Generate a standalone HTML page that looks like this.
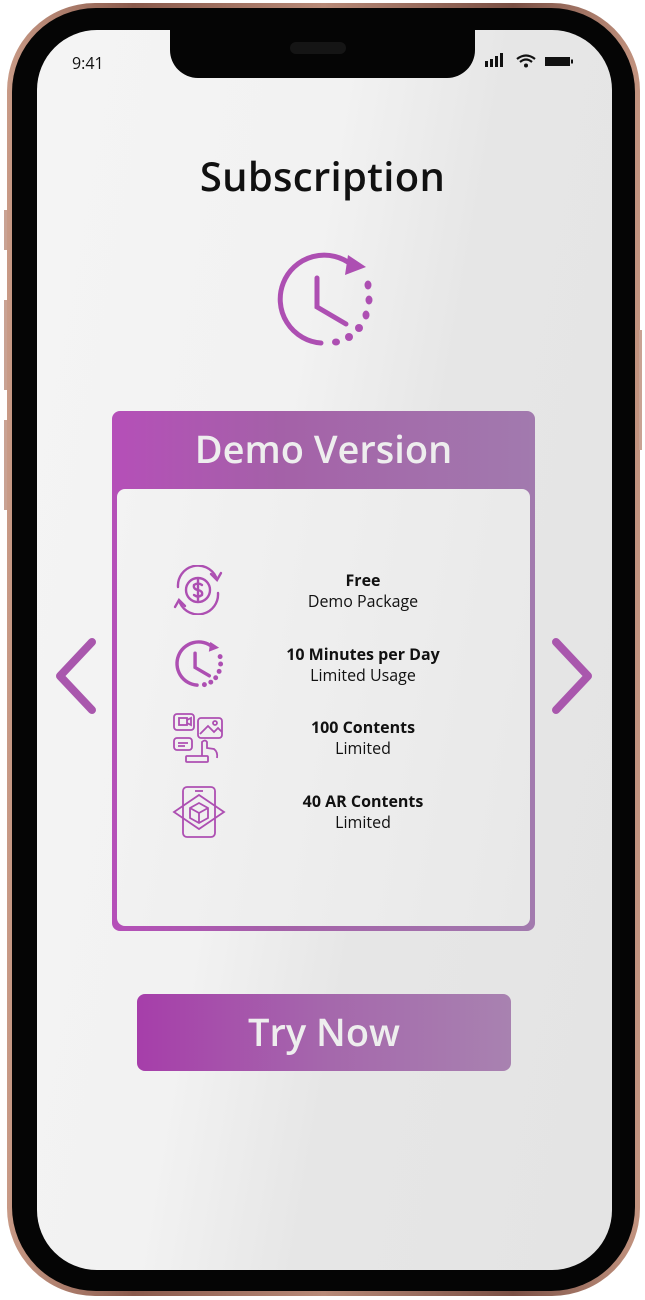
<!DOCTYPE html>
<html><head><meta charset="utf-8"><style>
html,body{margin:0;padding:0;background:#fff;width:645px;height:1300px;overflow:hidden;font-family:"Open Sans","Liberation Sans",sans-serif}
.frame{position:absolute;left:7px;top:3px;width:633px;height:1293px;border-radius:88px;background:linear-gradient(90deg,#c89a86,#8a5a4c 20%,#b88a78 50%,#7a4f44 80%,#c39480);}
.bezel{position:absolute;left:12px;top:8px;width:623px;height:1283px;border-radius:84px;background:#050505}
.screen{position:absolute;left:37px;top:30px;width:575px;height:1240px;border-radius:60px;background:linear-gradient(100deg,#f4f4f4 0%,#f2f2f2 40%,#e6e6e6 60%,#e4e4e4 100%);overflow:hidden}
.notch{position:absolute;left:170px;top:22px;width:305px;height:56px;background:#050505;border-radius:0 0 28px 28px}
.time{position:absolute;left:72px;top:52px;font-size:16px;color:#111}
h1{position:absolute;left:0;width:645px;top:148px;margin:0;text-align:center;font-weight:600;font-size:40px;color:#111;letter-spacing:0.3px}
.card{position:absolute;left:112px;top:411px;width:423px;height:520px;border-radius:8px;background:linear-gradient(90deg,#b54fb8,#a461a8 40%,#a27aae);}
.card .t{position:absolute;left:0;width:423px;top:18px;text-align:center;color:#eee;font-size:38px;line-height:40px;font-weight:600}
.inner{position:absolute;left:5px;top:78px;width:413px;height:437px;border-radius:8px;background:linear-gradient(100deg,#f3f3f3,#e8e8e8)}
.row{position:absolute;left:238px;width:250px;text-align:center;font-size:16px;color:#111;line-height:21px}
.btn{position:absolute;left:137px;top:994px;width:374px;height:77px;border-radius:8px;background:linear-gradient(90deg,#a63eaa,#a567ac 50%,#a882b0);color:#eee;text-align:center;font-size:38px;line-height:77px;font-weight:600}
.side{position:absolute;background:#c9a293;width:3px}
</style></head><body>
<div class="frame"></div>
<div class="bezel"></div>
<div class="side" style="left:4px;top:210px;height:40px"></div>
<div class="side" style="left:4px;top:300px;height:90px"></div>
<div class="side" style="left:4px;top:420px;height:90px"></div>
<div class="side" style="left:639px;top:330px;height:120px"></div>
<div class="screen"></div>
<div class="notch"></div>
<div style="position:absolute;left:290px;top:42px;width:56px;height:12px;border-radius:6px;background:#151515"></div>
<div class="time">9:41</div>
<svg style="position:absolute;left:484px;top:52px" width="95" height="20" viewBox="0 0 95 20">
<rect x="1" y="9" width="3" height="6" fill="#111"/><rect x="6" y="7" width="3" height="8" fill="#111"/><rect x="11" y="4" width="3" height="11" fill="#111"/><rect x="16" y="1" width="3" height="14" fill="#111"/>
<path d="M33 7 Q42 0 51 7" stroke="#111" stroke-width="2.2" fill="none"/><path d="M36 10 Q42 5 48 10" stroke="#111" stroke-width="2.2" fill="none"/><circle cx="42" cy="13.5" r="2" fill="#111"/>
<rect x="61" y="5" width="25" height="9" fill="#111"/><rect x="87" y="7.5" width="2" height="4" fill="#111"/>
</svg>
<h1>Subscription</h1>
<svg style="position:absolute;left:270px;top:245px" width="110" height="110" viewBox="0 0 110 110">
<g stroke="#ad4fb2" stroke-width="5" fill="none" stroke-linecap="round">
<path d="M51 98 A44 44 0 1 1 82 20"/>
<path d="M47 33 V62 L76 79"/>
</g>
<path d="M78 10 L96 22 L75 30 Z" fill="#ad4fb2"/>
<g fill="#ad4fb2"><ellipse cx="98" cy="40" rx="3.5" ry="4.5"/><ellipse cx="99" cy="55" rx="3.5" ry="4.5"/><ellipse cx="96" cy="70" rx="3.5" ry="4.5"/><ellipse cx="89" cy="83" rx="4" ry="4"/><ellipse cx="79" cy="92" rx="4" ry="4"/><ellipse cx="66" cy="97" rx="4" ry="3.5"/></g>
</svg>
<div class="card"><div class="t">Demo Version</div><div class="inner"></div></div>
<svg style="position:absolute;left:170px;top:565px" width="56" height="50" viewBox="0 0 56 50">
<g stroke="#ad4fb2" stroke-width="2.4" fill="none" stroke-linecap="round">
<path d="M8 22 A20 20 0 0 1 46 12"/><path d="M48 28 A20 20 0 0 1 10 38"/>
<path d="M41 9 L47 15 L51 8"/><path d="M15 41 L9 35 L5 42"/>
<circle cx="28" cy="25" r="12"/>
<path d="M32 20 Q28 17 24 20 Q23 24 28 25 Q33 26 32 30 Q28 33 24 30 M28 15 V35"/>
</g></svg>
<svg style="position:absolute;left:172px;top:637px" width="54" height="54" viewBox="0 0 110 110">
<g stroke="#ad4fb2" stroke-width="7" fill="none" stroke-linecap="round">
<path d="M51 98 A44 44 0 1 1 82 20"/><path d="M47 33 V62 L76 79"/></g>
<path d="M78 10 L96 22 L75 30 Z" fill="#ad4fb2"/>
<g fill="#ad4fb2"><circle cx="98" cy="40" r="5"/><circle cx="99" cy="55" r="5"/><circle cx="96" cy="70" r="5"/><circle cx="89" cy="83" r="5"/><circle cx="79" cy="92" r="5"/><circle cx="66" cy="97" r="5"/></g>
</svg>
<svg style="position:absolute;left:172px;top:712px" width="54" height="52" viewBox="0 0 54 52">
<g stroke="#ad4fb2" stroke-width="1.8" fill="none">
<rect x="2" y="2" width="20" height="16" rx="3"/><rect x="7" y="6" width="8" height="7"/><path d="M15 8 L19 6 V13 L15 11"/>
<rect x="26" y="6" width="24" height="20" rx="3"/><path d="M28 22 L36 14 L42 20 L46 16 L50 20"/><circle cx="43" cy="11" r="2"/>
<rect x="2" y="26" width="18" height="12" rx="3"/><path d="M6 31 H16 M6 34 H13"/>
<path d="M30 44 V30 Q33 27 35 30 V36 L42 37 Q46 40 45 46"/><rect x="14" y="44" width="22" height="6" rx="1"/>
</g></svg>
<svg style="position:absolute;left:172px;top:785px" width="54" height="54" viewBox="0 0 54 54">
<g stroke="#ad4fb2" stroke-width="1.8" fill="none">
<rect x="11" y="2" width="32" height="50" rx="4"/><path d="M23 6 H31"/>
<path d="M2 27 L27 10 L52 27 L27 44 Z"/>
<path d="M27 18 L36 23 V33 L27 38 L18 33 V23 Z M18 23 L27 28 L36 23 M27 28 V38"/>
</g></svg>
<div class="row" style="top:570px"><b>Free</b><br>Demo Package</div>
<div class="row" style="top:644px"><b>10 Minutes per Day</b><br>Limited Usage</div>
<div class="row" style="top:717px"><b>100 Contents</b><br>Limited</div>
<div class="row" style="top:791px"><b>40 AR Contents</b><br>Limited</div>
<svg style="position:absolute;left:50px;top:636px" width="50" height="80" viewBox="0 0 50 80"><path d="M42 6 L10 40 L42 74" stroke="#a957ad" stroke-width="8" fill="none" stroke-linecap="round" stroke-linejoin="round"/></svg>
<svg style="position:absolute;left:548px;top:636px" width="50" height="80" viewBox="0 0 50 80"><path d="M8 6 L40 40 L8 74" stroke="#a957ad" stroke-width="8" fill="none" stroke-linecap="round" stroke-linejoin="round"/></svg>
<div class="btn">Try Now</div>
</body></html>
